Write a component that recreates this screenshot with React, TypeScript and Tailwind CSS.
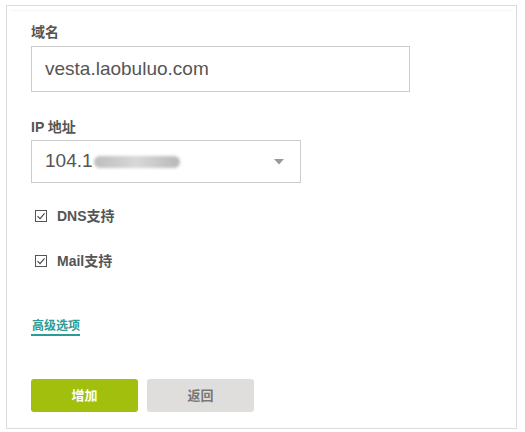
import React from "react";

const font = { fontFamily: '"Liberation Sans", Arial, "Noto Sans CJK SC", sans-serif' };

function Check({ label }: { label: string }) {
  return (
    <div className="flex items-center h-[16px]">
      <span className="w-[12px] h-[12px] border border-[#555] flex items-center justify-center ml-[4px]">
        <svg width="10" height="10" viewBox="0 0 10 10">
          <path d="M1.5 5.2 L4 7.6 L8.6 2.4" fill="none" stroke="#444" strokeWidth="1.1" />
        </svg>
      </span>
      <span className="ml-[10px] text-[14px] font-bold text-[#555]">{label}</span>
    </div>
  );
}

export default function App() {
  return (
    <div className="w-[525px] h-[432px] bg-white pt-[5px] pl-[6px]" style={font}>
      <div className="w-[511px] h-[424px] border border-[#dcdcdc] relative">
        <div className="absolute left-[3px] right-[3px] top-[4px] h-px bg-[#f6f6f6]" />
        <div className="flex flex-col pl-[24px] pt-[18px]">
          <div className="text-[14px] font-bold text-[#555] leading-[16px]">域名</div>
          <div className="mt-[6px] w-[379px] h-[46px] border border-[#cccccc] flex items-center pl-[13px] text-[19px] text-[#555]">
            vesta.laobuluo.com
          </div>
          <div className="mt-[27px] text-[14px] font-bold text-[#555] leading-[16px]">IP 地址</div>
          <div className="mt-[5px] w-[270px] h-[43px] border border-[#cccccc] flex items-center pl-[13px] pr-[16px] text-[19px] text-[#555]">
            <span>104.1</span>
            <span className="ml-[1px] w-[86px] h-[12px] rounded-full bg-gradient-to-r from-[#bdbdbd] via-[#d8d8d8] to-[#b8b8b8] blur-[1.5px]" />
            <span className="flex-1" />
            <svg width="10" height="6" viewBox="0 0 10 6"><path d="M0 0 L10 0 L5 5.5 Z" fill="#999" /></svg>
          </div>
          <div className="mt-[25px]"><Check label="DNS支持" /></div>
          <div className="mt-[29px]"><Check label="Mail支持" /></div>
          <div className="mt-[44px] self-start">
            <span className="text-[12px] font-bold text-[#2c9a96] leading-[14px] border-b-2 border-[#2c9a96] pb-[1px] inline-block pl-[1px]">高级选项</span>
          </div>
          <div className="mt-[42px] flex gap-[9px]">
            <button className="w-[107px] h-[33px] rounded-[3px] bg-[#a1bf0c] text-white text-[13px] font-bold">增加</button>
            <button className="w-[107px] h-[33px] rounded-[3px] bg-[#dfdedc] text-[#777] text-[13px] font-bold">返回</button>
          </div>
        </div>
      </div>
    </div>
  );
}
